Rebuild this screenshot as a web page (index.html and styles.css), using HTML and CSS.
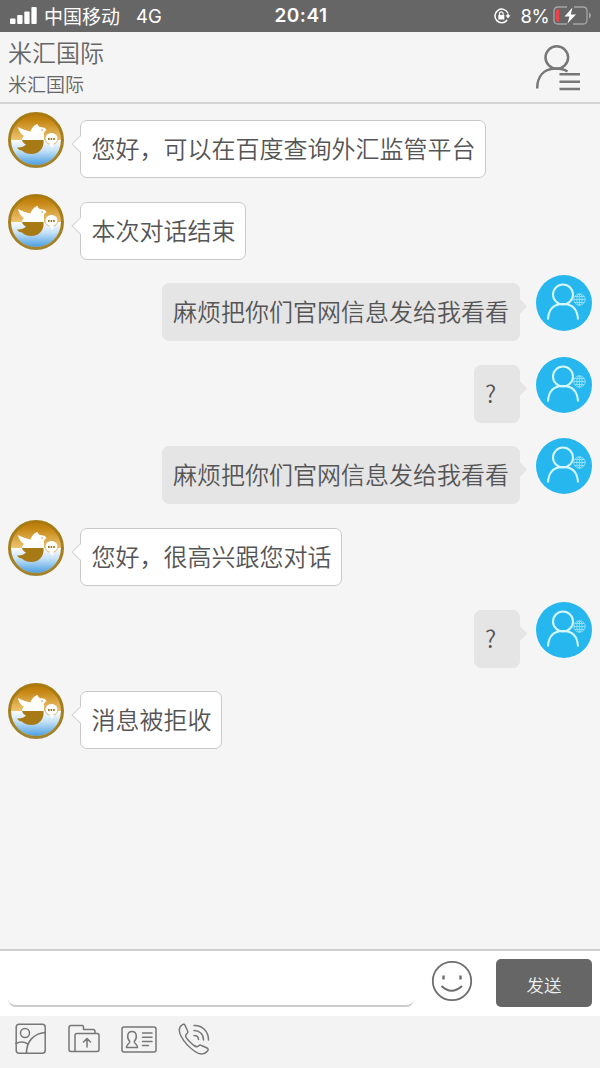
FILE: index.html
```html
<!DOCTYPE html>
<html lang="zh-CN">
<head>
<meta charset="utf-8">
<title>米汇国际</title>
<link rel="stylesheet" href="styles.css">
</head>
<body>
<svg class="defs" width="0" height="0" aria-hidden="true">
  <defs>
    <linearGradient id="gold" x1="0" y1="0" x2="0" y2="1">
      <stop offset="0" stop-color="#b87a08"/><stop offset=".12" stop-color="#c58612"/><stop offset=".5" stop-color="#edc472"/>
    </linearGradient>
    <linearGradient id="rim" x1="0" y1="0" x2="0" y2="1">
      <stop offset="0" stop-color="#a87a10"/><stop offset="1" stop-color="#a08432"/>
    </linearGradient>
    <linearGradient id="sea" x1="0" y1="0" x2="0" y2="1">
      <stop offset="0" stop-color="#fbfdff"/><stop offset=".4" stop-color="#c9e4f8"/><stop offset="1" stop-color="#4b9fe2"/>
    </linearGradient>
    <symbol id="agent" viewBox="0 0 56 56">
      <circle cx="28" cy="28" r="26" fill="url(#gold)"/>
      <path d="M3 28H53A25 25 0 0 1 3 28Z" fill="url(#sea)"/>
      <path d="M14 28H35.500C36.500 36 31 42 23.500 42C19 42 16 40.500 14 38.500C12 38.500 10 37.500 9 35.500C13 36 16 34.500 18 32.500C16 31.500 14.500 30 14 28Z" fill="#a87a16"/>
      <path d="M14 28C14 26.500 14.800 25 16 24C12.500 22 10.500 18.500 10 15C14 17.500 18.500 18.500 22.500 19.500C23.500 16 26.500 12.500 29.500 12C30 14.500 32 15.500 35 15.500C37 15.500 38 17 38.500 18.500C36.500 19 35.500 20.500 36 23.500V28Z" fill="#fff"/>
      <ellipse cx="43.500" cy="26.500" rx="6.500" ry="6" fill="#fff" stroke="#c99b42" stroke-width=".7"/>
      <path d="M41 32L44.500 36L46 31.500Z" fill="#fff"/>
      <path d="M40 27H47" stroke="#9b7325" stroke-width="1.800" stroke-dasharray="1.600 1"/>
      <circle cx="34" cy="18" r=".7" fill="#a8842b"/>
      <circle cx="28" cy="28" r="26.500" fill="none" stroke="url(#rim)" stroke-width="3"/>
    </symbol>
    <symbol id="visitor" viewBox="0 0 56 56">
      <circle cx="28" cy="28" r="28" fill="#26b7ef"/>
      <g fill="none" stroke="#d5f7ff" stroke-width="2">
        <circle cx="27" cy="19.5" r="10"/>
        <path d="M12 44.5C12.5 34 18 29 27 29S41.500 34 42 44.500"/>
      </g>
      <g fill="none" stroke="#91dff8" stroke-width="1">
        <circle cx="43.500" cy="24.500" r="5.700"/>
        <ellipse cx="43.500" cy="24.500" rx="2.600" ry="5.700"/>
        <path d="M43.500 19V30M38 24.500H49M39 21.500H48M39 27.500H48"/>
      </g>
    </symbol>
  </defs>
</svg>
<div class="app">
  <div class="status">
    <div class="status-left">
      <svg width="27" height="18" viewBox="0 0 27 18" fill="#fff"><rect x="0" y="11.500" width="5.500" height="5.500" rx="1"/><rect x="7.200" y="8" width="5.300" height="9" rx="1"/><rect x="14.300" y="4.500" width="5.300" height="12.500" rx="1"/><rect x="21.400" y="0" width="5.300" height="17" rx="1"/></svg>
      <span class="carrier">中国移动</span><span class="network">4G</span>
    </div>
    <time class="clock">20:41</time>
    <div class="status-right">
      <svg width="18" height="18" viewBox="0 0 18 18"><path d="M14.900 6A6.800 6.800 0 1 0 14.200 13M15 6.500V9" fill="none" stroke="#fff" stroke-width="1.500"/><path d="M12.500 8.300H17.500L15 11.600Z" fill="#fff"/><rect x="5.300" y="8" width="6" height="4.600" rx=".5" fill="#fff"/><path d="M6.500 8V6.600a1.800 1.800 0 0 1 3.600 0V8" fill="none" stroke="#fff" stroke-width="1.200"/></svg>
      <span class="percent">8%</span>
      <svg width="39" height="20" viewBox="0 0 39 20"><path d="M14 1H5Q1 1 1 5V14Q1 18 5 18H14M21 1H30Q34 1 34 5V14Q34 18 30 18H20" fill="none" stroke="#a5a5a5" stroke-width="1.300"/><path d="M36 6.500Q38 7.500 38 9.500T36 12.500Z" fill="#a5a5a5"/><path d="M6 3V16Q3 16 3 13V6Q3 3 6 3Z" fill="#f0404a"/><path d="M19.500 1.500L11.500 10.500H16.500L14.500 17.500L23 8.500H17.700Z" fill="#fff"/></svg>
    </div>
  </div>
  <header class="header">
    <div class="titles"><h1 class="title">米汇国际</h1><p class="subtitle">米汇国际</p></div>
    <svg width="46" height="48" viewBox="0 0 46 48" fill="none" stroke="#777" stroke-width="2.500"><circle cx="21.800" cy="13.500" r="11.300"/><path d="M2.200 44.500C2.200 32 9 25 20 24.500C25 24.300 29 25.200 32.500 27.500M24.500 30.300H45M24.500 37.700H45M24.500 45H45"/></svg>
  </header>
  <main class="messages">
    <div class="message"><svg class="avatar"><use href="#agent"/></svg><p class="bubble">您好，可以在百度查询外汇监管平台</p></div>
    <div class="message"><svg class="avatar"><use href="#agent"/></svg><p class="bubble">本次对话结束</p></div>
    <div class="message mine"><svg class="avatar"><use href="#visitor"/></svg><p class="bubble">麻烦把你们官网信息发给我看看</p></div>
    <div class="message mine"><svg class="avatar"><use href="#visitor"/></svg><p class="bubble">?</p></div>
    <div class="message mine"><svg class="avatar"><use href="#visitor"/></svg><p class="bubble">麻烦把你们官网信息发给我看看</p></div>
    <div class="message"><svg class="avatar"><use href="#agent"/></svg><p class="bubble">您好，很高兴跟您对话</p></div>
    <div class="message mine"><svg class="avatar"><use href="#visitor"/></svg><p class="bubble">?</p></div>
    <div class="message"><svg class="avatar"><use href="#agent"/></svg><p class="bubble">消息被拒收</p></div>
  </main>
  <section class="composer">
    <div class="input"></div>
    <svg width="42" height="42" viewBox="0 0 42 42" fill="none" stroke="#6d6d6d" stroke-width="1.800"><circle cx="21" cy="21" r="19.200"/><path d="M12.500 15.500V19.500M29.500 15.500V19.500" stroke-width="2.400"/><path d="M10.500 26Q20.500 35.500 31 26" stroke-width="2"/></svg>
    <button class="send">发送</button>
  </section>
  <nav class="tools">
    <svg width="32" height="32" viewBox="0 0 32 32"><rect x="1.200" y="1.200" width="29" height="29" rx="3"/><circle cx="10" cy="10" r="4.500"/><path d="M1 20.500Q7 17.500 12 20.500M11.500 30C11.500 18 19 10.500 30 9.500"/></svg>
    <svg width="32" height="32" viewBox="0 0 32 32"><path d="M7 28.500H3Q1 28.500 1 26.500V4.500Q1 2.500 3 2.500H14Q15.500 2.500 15.500 4V6.500H25Q27 6.500 27 8.500V10.500M7 28.500V12.500Q7 10.500 9 10.500H29.500Q31 10.500 31 12.500V26.500Q31 28.500 29 28.500ZM19 24V15.500M15.500 19L19 15.500L22.500 19"/></svg>
    <svg width="36" height="32" viewBox="0 0 36 32"><rect x="1" y="4" width="34" height="25" rx="2"/><path d="M8.700 18.500C5.500 15 6 8.500 11 8.500S16.500 15 13.300 18.500C12.800 21 16.500 20.500 16.500 24.500H5.500C5.500 20.500 9.200 21 8.700 18.500ZM21.500 10H31M21.500 14.200H31M21.500 18.400H31M21.500 22.600H27.500"/></svg>
    <svg width="32" height="32" viewBox="0 0 32 32"><path d="M7 2.200L9.500 7.800Q10.500 9.500 8.500 11C6.500 13 8 15 12 19C16 23 18.500 25 20.500 23Q22 21.500 23.500 22.500L29 25Q31 26 29.500 28C27 31.500 22 32 17 28.500C12 25 6 19 3 13C.5 8 1 4 4 2Q6 .500 7 2.200ZM16 2.500C24 2 30.500 8 30.500 17M16 7.500C21.500 7.500 25.500 11 25.500 17M16 12.500Q20.500 12.500 20.500 16.500"/></svg>
  </nav>
</div>
</body>
</html>
```

FILE: styles.css
```css
* { box-sizing: border-box; }
body { margin: 0; background: #f5f5f5; color: #555; font-family: "Noto Sans CJK SC", sans-serif; }
h1, p { margin: 0; font-weight: 350; }
svg { display: block; flex: none; }
.defs { position: absolute; }
.app { width: 600px; height: 1068px; display: flex; flex-direction: column; }

.status { height: 32px; flex: none; display: grid; grid-template-columns: 1fr auto 1fr; align-items: center; padding: 0 8px 0 10px; background: #666; color: #fff; font-size: 19px; line-height: 32px; }
.status-left, .status-right { display: flex; align-items: center; }
.status-right { justify-content: flex-end; }
.status-right > :first-child { margin-right: 2px; }
.carrier { margin-left: 7px; }
.network { margin-left: 16px; font-family: Inter, sans-serif; font-size: 18.5px; }
.clock { font: 600 19px/32px Inter, sans-serif; letter-spacing: .5px; }
.percent { margin: 0 4px 0 8px; font-family: Inter, sans-serif; font-size: 18.5px; letter-spacing: -.6px; }

.header { height: 72px; flex: none; display: flex; justify-content: space-between; padding: 12px 19px 0 8px; border-bottom: 2px solid #d4d4d4; color: #666; }
.title { margin-top: -8px; font-size: 24px; line-height: 32px; }
.subtitle { margin-top: 3px; font-size: 19px; line-height: 26px; }

.messages { flex: 1; min-height: 0; }
.message { height: 81.6px; display: flex; align-items: flex-start; gap: 16px; padding: 8px; }
.mine { flex-direction: row-reverse; }
.avatar { width: 56px; height: 56px; }
.bubble { position: relative; height: 58px; min-width: 46px; margin-top: 8px; padding: 0 9.5px 0 10.5px; border: 1.5px solid #c9c9c9; border-radius: 7px; background: #fff; font-size: 24px; line-height: 54px; white-space: nowrap; }
.bubble::before { content: ""; position: absolute; left: -7px; top: 17px; width: 11px; height: 11px; border: solid #d2d2d2; border-width: 0 0 1.5px 1.5px; background: #fff; transform: rotate(45deg); }
.mine .bubble { padding: 0 10px; border-color: #e5e5e5; background: #e5e5e5; }
.mine .bubble::before { left: auto; right: -6px; border: 0; background: #e5e5e5; }

.composer { height: 67px; flex: none; display: flex; align-items: flex-start; padding: 8px 8px 0; border-top: 2px solid #d0d0d0; background: #fff; }
.composer > svg { margin: 1px 23px 0 17px; }
.input { width: 406px; height: 48px; border-bottom: 2px solid #ccc; border-radius: 8px; }
.send { width: 96px; height: 48px; margin-left: auto; padding: 4px 0 0; border: 0; border-radius: 5px; background: #666; color: #eee; font: 350 17.5px/1 "Noto Sans CJK SC", sans-serif; }
.tools { height: 52px; flex: none; display: flex; align-items: flex-start; gap: 21px; padding: 7px 15px; background: #f3f3f3; }
.tools svg { fill: none; stroke: #777; stroke-width: 1.5; stroke-linejoin: round; stroke-linecap: round; }
```
